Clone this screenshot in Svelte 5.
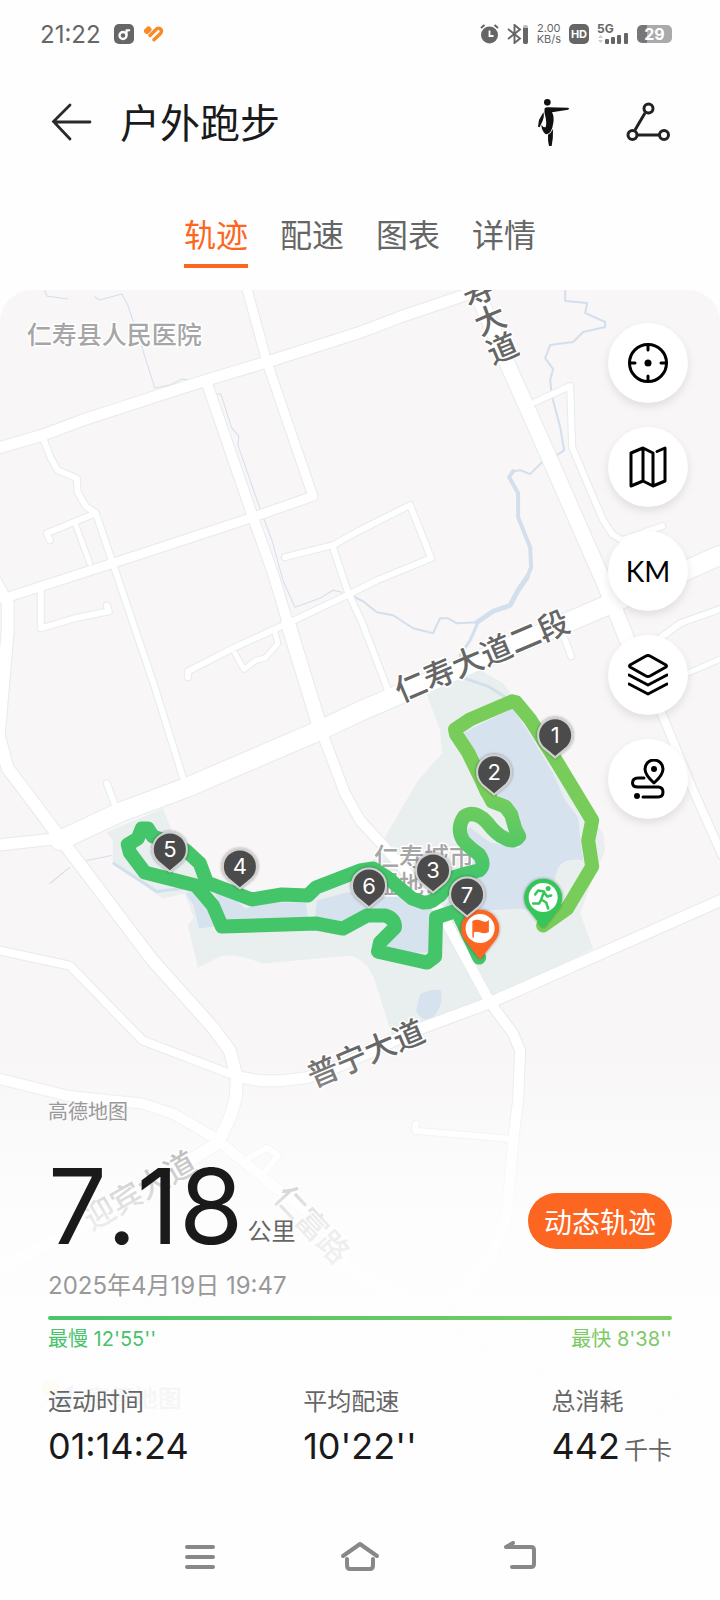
<script>
  let tabs = ['轨迹', '配速', '图表', '详情']
  let activeTab = '轨迹'

  // roads are drawn twice: a slightly wider casing first, then the white fill
  const roads = [
    { w: 19, d: 'M60 840 L120 812 L187 787 L320 730 L360 711 L607 605 L720 555' },
    { w: 11, d: 'M-5 845 L58 838' },
    { w: 12, d: 'M-8 575 L8 603 L8 630 L2 700 L-1 735 L8 768 L30 797 L62 840 L153 960 L213 1027 L230 1050 L237 1077 L236 1097 L230 1117 L218 1142 L190 1160 L100 1215 L-5 1270' },
    { w: 10, d: 'M218 1140 L267 1180 L345 1240 L345 1266 L427 1313 L470 1350 L560 1390 L720 1410' },
    { w: 8, d: 'M-5 949 L70 965 L143 1040 L230 1073' },
    { w: 11, d: 'M237 1076 L260 1080 L283 1080 L307 1077 L340 1065 L420 1028 L490 1002 L725 898' },
    { w: 10, d: 'M-5 1077 L67 1095 L143 1103 L173 1113 L220 1140' },
    { w: 10, d: 'M207 383 L253 517 L273 573 L288 623' },
    { w: 14, d: 'M288 623 L320 727' },
    { w: 10, d: 'M320 727 L345 793 L360 820 L383 845 L440 910 L490 1002 L513 1033 L520 1050 L518 1100 L513 1140 L507 1213 L493 1253 L460 1293 L427 1313 L330 1400 L260 1480' },
    { w: 9, d: 'M246 285 L267 362 L313 496 L253 517 L113 563 L8 597' },
    { w: 11, d: 'M-5 449 L43 435 L83 420 L160 395 L207 380 L267 362 L358 333 L400 317 L480 290' },
    { w: 15, d: 'M474 285 L507 363 L547 453 L605 585 L627 640' },
    { w: 8, d: 'M627 640 L663 717 L693 790 L722 855' },
    { w: 6, d: 'M535 402 L570 386 L572 447 L590 490 L603 520 L612 534 L622 540 L662 526' },
    { w: 6, d: 'M43 437 L51 458 L58 470 L77 478 L78 492 L86 506 L96 513 L113 563 L155 687 L183 777' },
    { w: 6, d: 'M96 513 L47 533 L50 540' },
    { w: 5, d: 'M76 525 L90 563' },
    { w: 6, d: 'M41 590 L41 628 L75 618 L109 611 L107 605' },
    { w: 6, d: 'M285 557 L333 545 L360 530 L410 505 L420 530 L431 558 L377 580 L347 595 L290 622 L233 648 L188 671 L188 677' },
    { w: 6, d: 'M333 547 L348 592 L362 622 L388 690' },
    { w: 5, d: 'M235 653 L244 669 L256 660 L265 658 L278 643 L275 632' },
    { w: 6, d: 'M107 783 L118 812' },
    { w: 6, d: 'M562 632 L571 656' },
    { w: 6, d: 'M657 640 L680 623 L722 608' },
    { w: 5, d: 'M680 676 L722 658' },
    { w: 6, d: 'M416 1123 L415 1130 L510 1138' },
    { w: 6, d: 'M248 1158 L267 1147 L278 1155 L266 1170' },
  ]

  const rivers = [
    { w: 1, d: 'M45 290 L47 296 L68 299 M95 297 L100 300 L122 294 L128 305 L143 350 L155 388 L170 385 L182 379 L190 380' },
    { w: 1, d: 'M216 394 L221 394 L232 428 L239 436 L238 445 L260 508 L272 540 L283 580 L295 607 L320 598 L333 590 L342 592' },
    { w: 2, d: 'M355 597 L363 601 L377 612 L393 615 L413 628 L433 633 L440 618 L448 618 L457 623 L477 622' },
    { w: 5, d: 'M477 622 L493 611 L510 605 L518 590 L527 577' },
    { w: 3, d: 'M477 624 L470 640 L460 655 L465 678 L488 686 L504 696' },
    { w: 4, d: 'M527 577 L531 567 L530 547 L518 517 L518 493 L509 477 L513 471' },
    { w: 2, d: 'M513 471 L520 470 L530 474 L542 462 L560 453 L564 450 L560 427 L552 397 L550 380 L553 369 L545 358 L550 345 L573 342 L583 332 L605 327 L605 322 L585 313 L587 303 L565 301 L565 285' },
    { w: 1, d: 'M50 883 L70 867 M87 860 L112 855' },
    { w: 3, d: 'M114 863 L157 891 L190 887' },
  ]

  const markers = [
    { n: 1, x: 555, y: 735 },
    { n: 2, x: 494, y: 772 },
    { n: 4, x: 240, y: 866 },
    { n: 5, x: 170, y: 849 },
    { n: 6, x: 369, y: 885 },
    { n: 3, x: 433, y: 870 },
    { n: 7, x: 467, y: 894 },
  ]

  const stats = [
    { label: '运动时间', value: '01:14:24', unit: '' },
    { label: '平均配速', value: "10'22''", unit: '' },
    { label: '总消耗', value: '442', unit: '千卡' },
  ]
</script>

<div class="screen">
  <div class="status">
    <div class="status-side">
      <span class="clock">21:22</span>
      <svg width="20" height="20" viewBox="0 0 20 20">
        <rect width="20" height="20" rx="5" fill="#666" />
        <circle cx="9" cy="11.500" r="3.500" fill="none" stroke="#fff" stroke-width="2.400" />
        <path d="M12.500 11.500 V5.500 Q13 7 16 6" fill="none" stroke="#fff" stroke-width="2.200" />
      </svg>
      <svg width="20" height="16" viewBox="0 0 20 16">
        <g fill="none" stroke="#f68b28" stroke-width="3.400" stroke-linecap="round">
          <path d="M3 5 L4.500 3.500" stroke-width="6" />
          <path d="M6 9.500 L11.500 4 Q14 1.200 16.500 3 Q18.500 5 16.500 7.500 L10 13.800" />
        </g>
      </svg>
    </div>
    <div class="status-side right">
      <svg width="19" height="20" viewBox="0 0 19 20">
        <circle cx="9.500" cy="11" r="8.500" fill="#666" />
        <path d="M1 4 L4.500 1 M18 4 L14.500 1" stroke="#666" stroke-width="2" />
        <path d="M9.500 6.500 V12 H13.500" fill="none" stroke="#fff" stroke-width="1.800" />
      </svg>
      <svg width="22" height="20" viewBox="0 0 22 20">
        <path d="M1 5 L13 14.500 L7.500 19 V1 L13 5.500 L1 15" fill="none" stroke="#666" stroke-width="1.900" />
        <rect x="16" y="1" width="5" height="19" rx="2" fill="#bbb" />
        <path d="M16 4 H21 V18 Q21 20 19 20 H18 Q16 20 16 18Z" fill="#666" />
      </svg>
      <span class="speed">2.00<br />KB/s</span>
      <span class="hd">HD</span>
      <span class="signal">
        <b>5G</b>
        <svg width="32" height="20" viewBox="0 0 32 20">
          <path d="M1 14 L3.500 11 L6 14Z M1 16 H6 L3.500 19Z" fill="#ccc" />
          <g fill="#666">
            <rect x="8" y="15" width="4" height="5" rx="1" />
            <rect x="14" y="13" width="4" height="7" rx="1" />
            <rect x="20" y="11" width="4" height="9" rx="1" />
            <rect x="27" y="9" width="4" height="11" rx="1" />
          </g>
        </svg>
      </span>
      <span class="battery">29</span>
    </div>
  </div>

  <header>
    <button type="button" class="plain" aria-label="返回">
      <svg width="42" height="40" viewBox="0 0 42 40">
        <path d="M40 20 H4 M20 3 L3.500 19.500 L20 37" fill="none" stroke="#2a2a2a" stroke-width="2.800" stroke-linecap="round" />
      </svg>
    </button>
    <h1>户外跑步</h1>
    <button type="button" class="plain" aria-label="拉伸">
      <svg width="36" height="52" viewBox="0 0 108 156">
        <g fill="#111">
          <circle cx="34" cy="19" r="10" />
          <path d="M26 37 Q28 34 36 34 L96 35 Q102 38 96 41 L48 49 Q55 62 52 80 Q50 98 43 108 Q37 116 28 114 Q17 104 16 86 Q20 94 29 94 Q33 78 27 57 Q24 47 26 37Z" />
          <path d="M22 49 Q26 60 20 74 L11 94 L6 92 L9 72Z" />
          <path d="M51 99 Q52 126 47 150 L39 150 Q35 134 36 116 Q45 112 51 99Z" />
        </g>
      </svg>
    </button>
    <button type="button" class="plain share" aria-label="分享">
      <svg width="44" height="40" viewBox="0 0 44 40">
        <g fill="none" stroke="#222" stroke-width="3">
          <path d="M19 11 L9 28 M11 33 H33" />
          <circle cx="22.500" cy="6.500" r="4.500" />
          <circle cx="6.500" cy="33" r="4.500" />
          <circle cx="38" cy="33" r="4.500" />
        </g>
      </svg>
    </button>
  </header>

  <nav class="tabs">
    {#each tabs as tab}
      <button type="button" class:active={tab === activeTab} on:click={() => (activeTab = tab)}>{tab}</button>
    {/each}
  </nav>

  <main>
    <svg class="map" viewBox="0 290 720 1222" preserveAspectRatio="xMidYMin slice">
      <defs>
        <linearGradient id="pace" gradientUnits="userSpaceOnUse" x1="0" y1="790" x2="0" y2="875">
          <stop offset="0" stop-color="#76cd5c" />
          <stop offset="1" stop-color="#44c56a" />
        </linearGradient>
        <filter id="pinShadow" x="-50%" y="-50%" width="200%" height="200%">
          <feDropShadow dx="0" dy="0" stdDeviation="1.500" flood-color="#000" flood-opacity=".45" />
        </filter>
      </defs>

      <!-- park and lakes -->
      <path class="park" d="M427 695 L477 668 L503 683 L530 720 L565 780 L603 833 L605 850 L593 877 L580 913 L593 948 L490 1000 L392 1035 L377 987 Q370 960 350 955 L263 963 Q235 952 220 956 L198 967 L188 925 L194 917 L185 893 L163 898 L113 863 L113 840 L107 832 L163 808 L172 830 L213 880 L250 895 L312 890 L370 865 L387 833 L418 780 L442 753 L440 730 Z" />
      <path class="water" d="M463 733 L512 708 L527 730 L553 773 L565 800 L578 817 L580 837 L583 860 Q565 856 558 867 Q552 880 557 893 L560 915 L520 908 L487 910 L440 913 L430 952 L412 952 L385 947 L403 927 L390 913 L367 910 L343 922 L315 916 L317 900 L347 892 L390 890 L420 908 L445 905 L475 872 L455 838 L470 827 L490 842 L520 848 L505 805 L485 780 Z" />
      <path class="water" d="M214 890 Q230 888 232 896 L245 908 L272 902 L306 902 L308 918 L240 921 L225 918 Z" />
      <path class="water" d="M186 893 L204 888 L222 925 L199 928 L194 905 Z" />
      <path class="water" d="M420 994 Q432 987 441 990 Q444 1005 432 1018 Q422 1022 416 1010 Z" />
      {#each rivers as river}
        <path class="river" d={river.d} stroke-width={river.w} />
      {/each}

      {#each roads as road}
        <path class="casing" d={road.d} stroke-width={road.w + 2} />
      {/each}
      {#each roads as road}
        <path class="road" d={road.d} stroke-width={road.w} />
      {/each}

      <g class="place">
        <text x="27" y="344">仁寿县人民医院</text>
        <text x="374" y="866">仁寿城市</text>
        <text x="374" y="893">湿地公园</text>
      </g>
      <g class="street">
        <text class="down" transform="translate(488 320) rotate(-23)">寿大道</text>
        <text transform="translate(482 656) rotate(-23)" dy="11">仁寿大道二段</text>
        <text transform="translate(366 1053) rotate(-23)" dy="11">普宁大道</text>
        <text transform="translate(140 1190) rotate(-30)" dy="11">迎宾大道</text>
        <text transform="translate(312 1224) rotate(47)" dy="11">仁富路</text>
      </g>

      <circle cx="51" cy="1388" r="9" fill="#f2d94e" />
      <path d="M46 1400 L74 1383 L70 1409 L60 1404Z" fill="#3d8bea" />
      <text class="logo" x="86" y="1406">高德地图</text>

      <g class="track">
        <path stroke="url(#pace)" d="M483 783 L492 801 L505 806 L511 814 L515 828 L519 836 Q514 843 505 838 Q496 834 487 822 Q475 809 464 816 Q456 828 463 840 Q468 846 479 854 Q486 864 479 870 Q465 873 453 877 L440 895" />
        <path stroke="#44c56a" d="M440 893 Q433 903 423 902 L412 898 L387 877 L373 868 L360 870 L316 887 L308 895 L282 894 L252 899 L207 882 L200 863 L186 850 L170 842 L153 836 L148 828 L142 828 L138 838 L128 844 L130 852 L145 872 L196 885 L213 905 L222 926 L317 923 L343 928 L367 915 L385 915 Q395 918 395 927 L380 942 L378 951 L427 962 L435 956 L436 917 L457 910 L479 957" />
        <path stroke="#78cd5a" d="M543 925 L567 908 L592 866 L588 840 L592 820 L557 762 L530 719 L516 702 L512 701 L470 719 L455 729 L456 734 L468 752 L483 783 L487 792" />
      </g>

      <g filter="url(#pinShadow)">
        <path d="M543 928 L528 909 A19 19 0 1 1 558 909 Z" fill="#35c65a" />
        <circle cx="543" cy="897" r="14.500" fill="#fff" />
        <circle cx="548" cy="888" r="2.500" fill="#35c65a" />
        <path d="M535 894 L538 890 L544 891 L541 899 L546 902 L548 908 M541 899 L539 903 L533 903 M544 892 L547 896 L551 895" fill="none" stroke="#35c65a" stroke-width="2.500" stroke-linejoin="round" stroke-linecap="round" />
      </g>
      <g filter="url(#pinShadow)">
        <path d="M480 959 L465 940 A19 19 0 1 1 495 940 Z" fill="#fc6621" />
        <circle cx="480" cy="928" r="14.500" fill="#fff" />
        <path d="M473 937 V921 Q477 919 481 921 Q485 923 488 921 V931 Q484 933 480 931 Q477 930 474 931" fill="#fc6621" stroke="#fc6621" stroke-width="1.500" />
      </g>
      {#each markers as marker}
        <g class="pin" transform="translate({marker.x} {marker.y})">
          <path d="M0 22 L-12 12 A17 17 0 1 1 12 12 Z" filter="url(#pinShadow)" />
          <text y="8">{marker.n}</text>
        </g>
      {/each}
    </svg>

    <div class="tools">
      <button type="button" aria-label="定位">
        <svg width="40" height="40" viewBox="0 0 40 40">
          <circle cx="20" cy="20" r="18.500" />
          <path d="M20 1 V7 M20 33 V39 M1 20 H7 M33 20 H39" />
          <circle cx="20" cy="20" r="3.500" fill="#000" stroke="none" />
        </svg>
      </button>
      <button type="button" aria-label="地图">
        <svg width="40" height="44" viewBox="0 0 40 44">
          <path d="M3 8 L15 3 L25 8 V41 L15 36 L3 41Z M15 3 V36 M25 41 L37 36 V3 L29 6.500" />
        </svg>
      </button>
      <button type="button" class="km">KM</button>
      <button type="button" aria-label="图层">
        <svg width="40" height="42" viewBox="0 0 40 42">
          <path d="M18 2 Q20 1 22 2 L38 11 Q39 12 38 13 L22 22 Q20 23 18 22 L2 13 Q1 12 2 11Z" />
          <path d="M1 21 L20 31 L39 21 M1 30 L20 40 L39 30" />
        </svg>
      </button>
      <button type="button" aria-label="路线">
        <svg width="34" height="40" viewBox="0 0 34 40">
          <path d="M23 24 Q14 16 14 10 A9 9 0 0 1 32 10 Q32 16 23 24Z M13 19 H7 Q1.500 19 1.500 24 Q1.500 28 7 28 H27 Q32 28 32 33 Q32 38 27 38 H12" />
          <circle cx="23" cy="10" r="3" fill="#000" stroke="none" />
          <circle cx="6" cy="37" r="3" fill="#000" stroke="none" />
        </svg>
      </button>
    </div>

    <section class="summary">
      <div class="source">高德地图</div>
      <div class="hero">
        <div class="distance"><strong>7.18</strong><span>公里</span></div>
        <button type="button">动态轨迹</button>
      </div>
      <div class="date">2025年4月19日 19:47</div>
      <div class="bar"></div>
      <div class="pace">
        <span class="slow">最慢 12'55''</span>
        <span class="fast">最快 8'38''</span>
      </div>
      <div class="stats">
        {#each stats as stat}
          <div>
            <div class="label">{stat.label}</div>
            <div class="value">{stat.value}{#if stat.unit}<small>{stat.unit}</small>{/if}</div>
          </div>
        {/each}
      </div>
    </section>
  </main>

  <footer>
    <button type="button" aria-label="任务">
      <svg width="32" height="32" viewBox="0 0 32 32"><path d="M3 6 H29 M3 16 H29 M3 26 H29" /></svg>
    </button>
    <button type="button" aria-label="主页">
      <svg width="40" height="32" viewBox="0 0 40 32"><path d="M3 15 L20 3 L37 15 M7 18 V24 Q7 28 10 28 H30 Q33 28 33 24 V18" /></svg>
    </button>
    <button type="button" aria-label="后退">
      <svg width="36" height="32" viewBox="0 0 36 32"><path d="M11 2 L4 6 H29 Q32 6 32 9 V23 Q32 26 29 26 H10" /></svg>
    </button>
  </footer>
</div>

<style>
  :global(body) {
    margin: 0;
    background: #fefefe;
  }

  * {
    box-sizing: border-box;
  }

  .screen {
    display: flex;
    flex-direction: column;
    font-family: Inter, 'Noto Sans CJK SC', sans-serif;
    color: #1a1a1a;
  }

  button {
    padding: 0;
    border: 0;
    background: none;
    font: inherit;
    color: inherit;
  }
  svg {
    display: block;
  }

  .status {
    display: flex;
    justify-content: space-between;
    height: 68px;
    padding: 0 48px 0 40px;
    color: #666;
  }
  .status-side {
    display: flex;
    align-items: center;
    gap: 10px;
  }
  .right {
    gap: 8px;
  }
  .clock {
    margin-right: 3px;
    font-size: 24px;
  }
  .speed {
    font-size: 11px;
    line-height: 11px;
    text-align: center;
  }
  .hd {
    width: 20px;
    border-radius: 5px;
    background: #666;
    color: #fff;
    font-size: 11px;
    font-weight: 700;
    line-height: 20px;
    text-align: center;
  }
  .signal {
    position: relative;
  }
  .signal b {
    position: absolute;
    top: 0;
    left: 0;
    font-size: 12px;
    line-height: 10px;
  }
  .battery {
    width: 35px;
    border-radius: 5px;
    background: linear-gradient(90deg, #777 29%, #aaa 29%);
    color: #fff;
    font-size: 16px;
    font-weight: 700;
    line-height: 18px;
    text-align: center;
  }

  header {
    display: flex;
    align-items: center;
    height: 108px;
    padding: 0 50px;
  }
  h1 {
    flex: 1;
    margin: 4px 0 0 28px;
    font-size: 40px;
    font-weight: 400;
    line-height: 56px;
  }
  .share {
    margin-left: 54px;
  }

  .tabs {
    display: flex;
    justify-content: center;
    gap: 32px;
    padding: 40px 0 22px;
  }
  .tabs button {
    padding-bottom: 8px;
    font-size: 32px;
    line-height: 40px;
    color: #666;
    border-bottom: 4px solid transparent;
  }
  .tabs .active {
    color: #fc6621;
    border-color: #fc6621;
  }

  main {
    position: relative;
    overflow: hidden;
    border-radius: 32px 32px 0 0;
    background: #f8f6f7;
  }
  .map {
    position: absolute;
    width: 100%;
    height: 100%;
  }
  .park {
    fill: #e9eeee;
  }
  .water {
    fill: #d7e2ef;
  }
  .river,
  .casing,
  .road,
  .track path {
    fill: none;
    stroke-linecap: round;
    stroke-linejoin: round;
  }
  .river {
    stroke: #d3dfec;
  }
  .casing {
    stroke: #e6ebeb;
  }
  .road {
    stroke: #fefffe;
  }
  .track path {
    stroke-width: 14px;
  }
  .map text {
    paint-order: stroke;
    stroke: #fff;
    stroke-width: 3px;
    stroke-linejoin: round;
  }
  .place {
    font-size: 25px;
    font-weight: 500;
    fill: #a6a6a6;
  }
  .street {
    font-size: 31px;
    font-weight: 500;
    fill: #666;
    text-anchor: middle;
  }
  .down {
    writing-mode: vertical-rl;
  }
  .logo {
    font-size: 24px;
    font-weight: 700;
    fill: #777;
  }
  .pin path {
    fill: #4b4b4b;
    stroke: #d0d0d0;
    stroke-width: 2px;
    stroke-linejoin: round;
  }
  .map .pin text {
    fill: #fff;
    stroke: none;
    font-size: 22px;
    text-anchor: middle;
  }

  .tools {
    position: relative;
    display: flex;
    flex-direction: column;
    align-items: flex-end;
    gap: 24px;
    padding: 33px 32px 231px;
  }
  .tools button {
    display: flex;
    align-items: center;
    justify-content: center;
    width: 80px;
    height: 80px;
    border-radius: 50%;
    background: #fff;
    box-shadow: 0 4px 10px rgba(0, 0, 0, 0.1);
  }
  .tools svg {
    fill: none;
    stroke: #000;
    stroke-width: 3px;
    stroke-linecap: round;
    stroke-linejoin: round;
  }
  .tools .km {
    font-family: Lato, sans-serif;
    font-size: 28px;
    color: #000;
  }

  .summary {
    position: relative;
    padding: 49px 48px 40px;
    background: linear-gradient(
      rgba(254, 254, 254, 0),
      rgba(254, 254, 254, 0.35) 13%,
      rgba(254, 254, 254, 0.65) 25%,
      rgba(254, 254, 254, 0.88) 37%,
      rgba(254, 254, 254, 0.94) 54%,
      rgba(254, 254, 254, 0.94) 85%,
      #fefefe
    );
  }
  .source {
    font-size: 20px;
    line-height: 26px;
    color: #999;
  }
  .hero {
    display: flex;
    align-items: center;
    justify-content: space-between;
    margin-top: 29px;
  }
  .distance strong {
    font-size: 104px;
    font-weight: 400;
    font-kerning: none;
    line-height: 104px;
  }
  .distance span {
    margin-left: 4px;
    font-size: 24px;
    vertical-align: 4px;
    color: #666;
  }
  .hero button {
    width: 144px;
    height: 56px;
    margin-top: 30px;
    border-radius: 28px;
    background: #fc6621;
    color: #fff;
    font-size: 28px;
  }
  .date {
    margin-top: 12px;
    font-size: 24px;
    line-height: 32px;
    color: #999;
  }
  .bar {
    height: 4px;
    margin-top: 14px;
    border-radius: 2px;
    background: linear-gradient(90deg, #49c56c, #7ccd60);
  }
  .pace {
    display: flex;
    justify-content: space-between;
    margin-top: 5px;
    font-size: 20px;
    line-height: 28px;
  }
  .slow {
    color: #49c26c;
  }
  .fast {
    color: #7cc964;
  }
  .stats {
    display: grid;
    grid-template-columns: 1fr auto 1fr;
    margin-top: 33px;
  }
  .stats > :last-child {
    justify-self: end;
  }
  .label {
    font-size: 24px;
    line-height: 32px;
    color: #666;
  }
  .value {
    margin-top: 6px;
    font-size: 36px;
    line-height: 44px;
  }
  .value small {
    margin-left: 4px;
    font-size: 24px;
    color: #666;
  }

  footer {
    display: flex;
    justify-content: center;
    height: 88px;
  }
  footer button {
    display: flex;
    align-items: center;
    justify-content: center;
    width: 160px;
  }
  footer svg {
    fill: none;
    stroke: #888;
    stroke-width: 4px;
    stroke-linecap: round;
    stroke-linejoin: round;
  }
</style>
